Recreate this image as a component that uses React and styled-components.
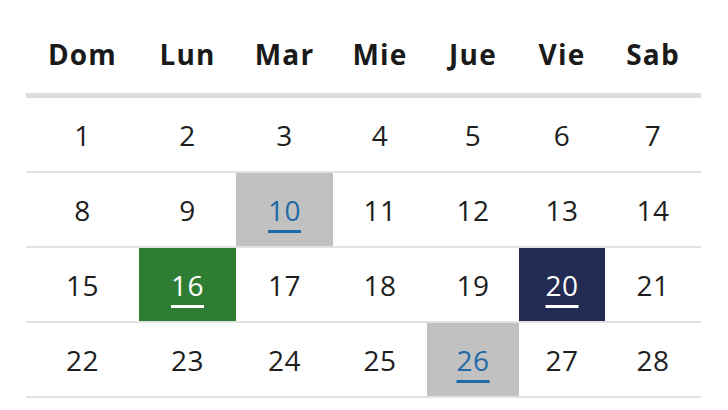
import React from "react";
import styled, { createGlobalStyle } from "styled-components";

const Global = createGlobalStyle`
  html, body { margin: 0; padding: 0; background: #fff; }
  body { font-family: "Open Sans", "Noto Sans", sans-serif; }
`;

const Page = styled.div`
  padding: 0 27px 0 26px;
  width: 728px;
  box-sizing: border-box;
`;

const COLS = "113px 97px 97px 94px 92px 86px 96px";

const HeadRow = styled.div`
  display: grid;
  grid-template-columns: ${COLS};
  height: 93px;
  border-bottom: 5px solid #dddddd;
`;

const HeadCell = styled.div`
  display: flex;
  align-items: center;
  justify-content: center;
  padding-top: 14px;
  font-weight: 700;
  font-size: 28px;
  color: #1a1a1a;
  letter-spacing: 1.2px;
`;

const Row = styled.div`
  display: grid;
  grid-template-columns: ${COLS};
  height: 73px;
  border-bottom: 2px solid #e2e2e2;
`;

const variants = {
  plain: { bg: "transparent", fg: "#1e1e1e", line: false },
  event: { bg: "#c1c1c1", fg: "#1f6aa5", line: true },
  today: { bg: "#2e7d32", fg: "#ffffff", line: true },
  selected: { bg: "#222b52", fg: "#ffffff", line: true },
};

const DayCell = styled.div`
  display: flex;
  align-items: center;
  justify-content: center;
  background: ${(p) => variants[p.$kind].bg};
  color: ${(p) => variants[p.$kind].fg};
  font-size: 28px;
  font-weight: 400;
  letter-spacing: 0.5px;
  box-sizing: border-box;
`;

const DayLink = styled.span`
  text-decoration: ${(p) => (p.$line ? "underline" : "none")};
  text-decoration-thickness: 3px;
  text-underline-offset: 9px;
`;

const days = ["Dom", "Lun", "Mar", "Mie", "Jue", "Vie", "Sab"];
const special = { 10: "event", 16: "today", 20: "selected", 26: "event" };

const weeks = [];
for (let w = 0; w < 4; w++) {
  const r = [];
  for (let d = 1; d <= 7; d++) r.push(w * 7 + d);
  weeks.push(r);
}

export default function App() {
  return (
    <>
      <Global />
      <Page>
        <HeadRow>
          {days.map((d) => (
            <HeadCell key={d}>{d}</HeadCell>
          ))}
        </HeadRow>
        {weeks.map((wk, i) => (
          <Row key={i}>
            {wk.map((n) => {
              const kind = special[n] || "plain";
              return (
                <DayCell key={n} $kind={kind}>
                  <DayLink $line={variants[kind].line}>{n}</DayLink>
                </DayCell>
              );
            })}
          </Row>
        ))}
      </Page>
    </>
  );
}
